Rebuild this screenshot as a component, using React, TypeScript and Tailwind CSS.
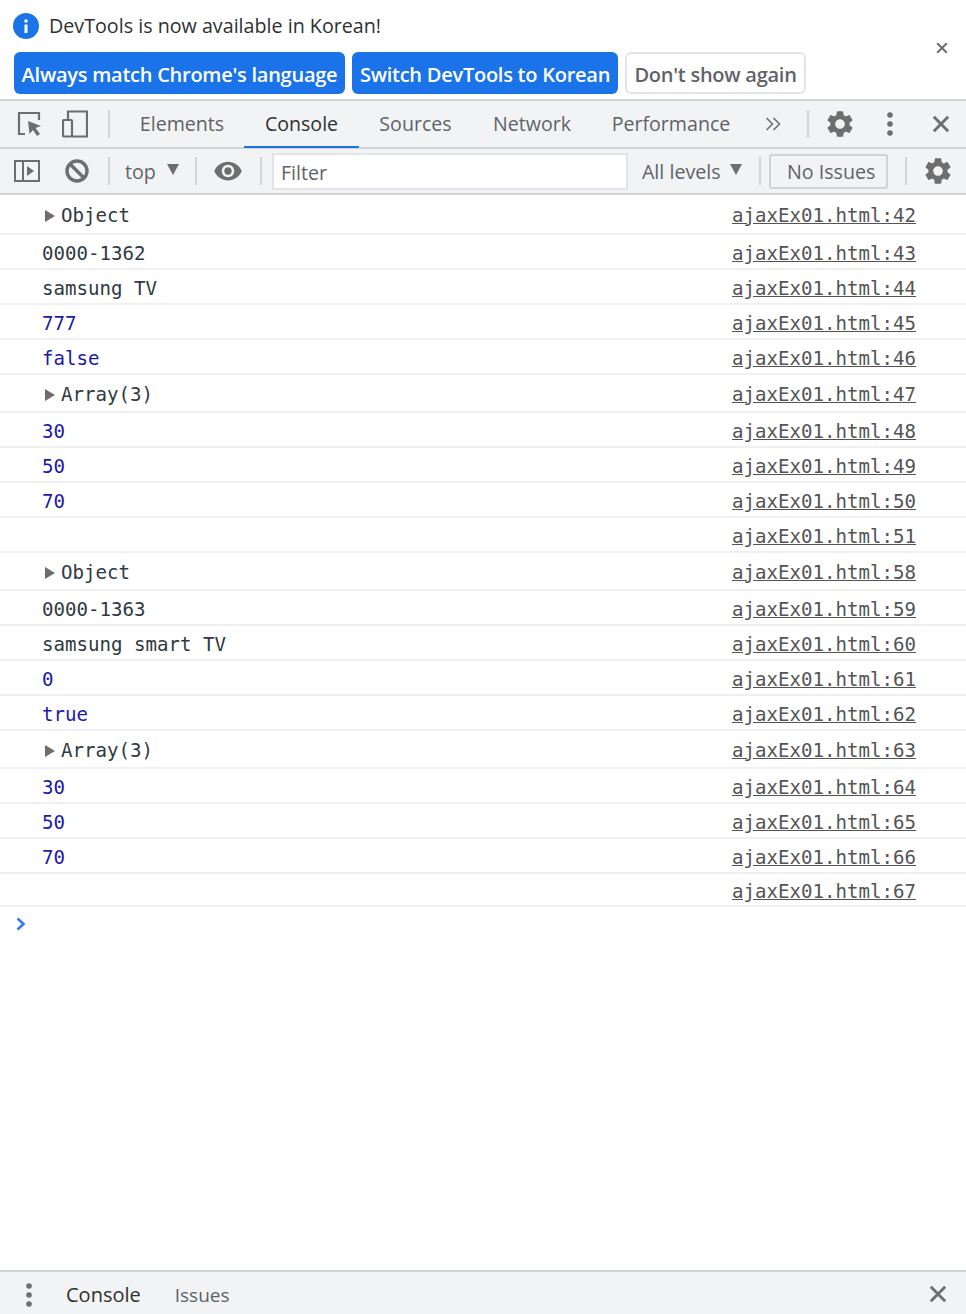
import clsx from 'clsx'

const uiFont = 'font-["Open_Sans",sans-serif]'

type Row = { text?: string; kind?: 'plain' | 'value' | 'group'; line: number; height: string }

const rows: Row[] = [
  { text: 'Object', kind: 'group', line: 42, height: 'h-[40px]' },
  { text: '0000-1362', line: 43, height: 'h-[35px]' },
  { text: 'samsung TV', line: 44, height: 'h-[35px]' },
  { text: '777', kind: 'value', line: 45, height: 'h-[35px]' },
  { text: 'false', kind: 'value', line: 46, height: 'h-[35px]' },
  { text: 'Array(3)', kind: 'group', line: 47, height: 'h-[38px]' },
  { text: '30', kind: 'value', line: 48, height: 'h-[35px]' },
  { text: '50', kind: 'value', line: 49, height: 'h-[35px]' },
  { text: '70', kind: 'value', line: 50, height: 'h-[35px]' },
  { line: 51, height: 'h-[35px]' },
  { text: 'Object', kind: 'group', line: 58, height: 'h-[38px]' },
  { text: '0000-1363', line: 59, height: 'h-[35px]' },
  { text: 'samsung smart TV', line: 60, height: 'h-[35px]' },
  { text: '0', kind: 'value', line: 61, height: 'h-[35px]' },
  { text: 'true', kind: 'value', line: 62, height: 'h-[35px]' },
  { text: 'Array(3)', kind: 'group', line: 63, height: 'h-[38px]' },
  { text: '30', kind: 'value', line: 64, height: 'h-[35px]' },
  { text: '50', kind: 'value', line: 65, height: 'h-[35px]' },
  { text: '70', kind: 'value', line: 66, height: 'h-[35px]' },
  { line: 67, height: 'h-[33px]' },
]

function GearIcon({ className }: { className?: string }) {
  return (
    <svg viewBox="0 0 24 24" className={className} fill="#6e6e6e">
      <path d="M19.14 12.94c.04-.3.06-.61.06-.94 0-.32-.02-.64-.07-.94l2.03-1.58c.18-.14.23-.41.12-.61l-1.92-3.32c-.12-.22-.37-.29-.59-.22l-2.39.96c-.5-.38-1.03-.7-1.62-.94l-.36-2.54c-.04-.24-.24-.41-.48-.41h-3.84c-.24 0-.43.17-.47.41l-.36 2.54c-.59.24-1.13.57-1.62.94l-2.39-.96c-.22-.08-.47 0-.59.22L2.74 8.87c-.12.21-.08.47.12.61l2.03 1.58c-.05.3-.09.63-.09.94s.02.64.07.94l-2.03 1.58c-.18.14-.23.41-.12.61l1.92 3.32c.12.22.37.29.59.22l2.39-.96c.5.38 1.03.7 1.62.94l.36 2.54c.05.24.24.41.48.41h3.84c.24 0 .44-.17.47-.41l.36-2.54c.59-.24 1.13-.56 1.62-.94l2.39.96c.22.08.47 0 .59-.22l1.92-3.32c.12-.22.07-.47-.12-.61l-2.01-1.58zM12 15.6c-1.98 0-3.6-1.62-3.6-3.6s1.62-3.6 3.6-3.6 3.6 1.62 3.6 3.6-1.62 3.6-3.6 3.6z" />
    </svg>
  )
}

function CloseIcon({ className, width = 3 }: { className?: string; width?: number }) {
  return (
    <svg viewBox="0 0 20 20" className={className} fill="none" stroke="#6e6e6e" strokeWidth={width}>
      <path d="M2 2 18 18M18 2 2 18" />
    </svg>
  )
}

function Dots({ className }: { className?: string }) {
  return (
    <svg viewBox="0 0 6 24" className={className} fill="#6e6e6e">
      <circle cx="3" cy="3" r="2.8" />
      <circle cx="3" cy="12" r="2.8" />
      <circle cx="3" cy="21" r="2.8" />
    </svg>
  )
}

function Divider({ className }: { className?: string }) {
  return <div className={clsx('h-[28px] w-[2px] shrink-0 bg-[#d2d4d8]', className)} />
}

function Caret({ className }: { className?: string }) {
  return (
    <svg viewBox="0 0 12 11" className={clsx('h-[11px] w-[12px] shrink-0', className)} fill="#6e6e6e">
      <path d="M0 0h12L6 11z" />
    </svg>
  )
}

function InfoBar() {
  const button = 'flex h-[42px] items-center justify-center whitespace-nowrap rounded-[6px] pt-[3px] text-[20px] font-semibold tracking-[-0.25px]'
  return (
    <div className="relative h-[99px] bg-white">
      <div className="flex items-center pl-[13px] pt-[12px]">
        <svg viewBox="0 0 26 26" className="h-[26px] w-[26px] shrink-0">
          <circle cx="13" cy="13" r="13" fill="#1a73e8" />
          <circle cx="13" cy="8" r="1.8" fill="#fff" />
          <rect x="11.5" y="11.5" width="3" height="8.5" fill="#fff" />
        </svg>
        <span className="ml-[10px] text-[19.7px] leading-[28px] text-[#303030]">DevTools is now available in Korean!</span>
      </div>
      <div className="mt-[12px] flex gap-[7px] pl-[14px]">
        <button className={clsx(button, 'w-[331px] bg-[#1a73e8] text-white')}>Always match Chrome's language</button>
        <button className={clsx(button, 'w-[266px] bg-[#1a73e8] text-white')}>Switch DevTools to Korean</button>
        <button className={clsx(button, 'w-[181px] border-2 border-[#e2e4e9] bg-white text-[#5f6368]')}>Don't show again</button>
      </div>
      <CloseIcon className="absolute right-[18px] top-[42px] h-[12px] w-[12px]" width={3.4} />
    </div>
  )
}

function MainTabs() {
  const tabs = [
    { label: 'Elements', className: 'w-[134px] pl-[10px] text-[#5f6368]' },
    { label: 'Console', className: 'w-[115px] text-[#303030]', active: true },
    { label: 'Sources', className: 'w-[113px] text-[#5f6368]' },
    { label: 'Network', className: 'w-[120px] text-[#5f6368]' },
    { label: 'Performance', className: 'w-[158px] text-[#5f6368]' },
  ]
  return (
    <div className="flex h-[50px] items-center border-y-2 border-[#d0d2d6] bg-[#f1f3f4]">
      <svg viewBox="0 0 26 26" className="ml-[17px] h-[26px] w-[26px] shrink-0" fill="none" stroke="#6e6e6e" strokeWidth="2.2">
        <path d="M8 23H2V2h20v7" />
        <path d="M11 10l13 5-5.5 2 4.5 6-3 2-4-6-3.5 4z" fill="#6e6e6e" stroke="none" />
      </svg>
      <svg viewBox="0 0 26 28" className="ml-[19px] h-[28px] w-[26px] shrink-0" fill="none" stroke="#6e6e6e" strokeWidth="2.2">
        <path d="M6 9V1.5h19v25H10" />
        <rect x="1" y="10" width="9" height="16.5" rx="1" />
      </svg>
      <Divider className="ml-[20px]" />
      <div className="flex h-full">
        {tabs.map((tab) => (
          <div key={tab.label} className={clsx('relative flex items-center justify-center text-[19.6px]', tab.className)}>
            {tab.label}
            {tab.active ? <div className="absolute inset-x-0 -bottom-[1px] h-[2px] bg-[#1a73e8]" /> : null}
          </div>
        ))}
      </div>
      <svg viewBox="0 0 16 14" className="ml-[15px] h-[14px] w-[16px] shrink-0" fill="none" stroke="#6e6e6e" strokeWidth="1.6">
        <path d="M1.5 1 7.5 7 1.5 13M8.5 1 14.5 7 8.5 13" />
      </svg>
      <Divider className="ml-[26px]" />
      <GearIcon className="ml-[15px] h-[32px] w-[32px] shrink-0" />
      <Dots className="ml-[31px] h-[24px] w-[6px] shrink-0" />
      <CloseIcon className="ml-[39px] h-[18px] w-[18px] shrink-0" width={3.2} />
    </div>
  )
}

function ConsoleToolbar() {
  return (
    <div className="flex h-[46px] items-center border-b-2 border-[#d0d2d6] bg-[#f1f3f4] text-[19.7px] text-[#5f6368]">
      <svg viewBox="0 0 26 22" className="ml-[14px] h-[22px] w-[26px] shrink-0" fill="none" stroke="#6e6e6e" strokeWidth="2">
        <rect x="1" y="1" width="24" height="20" />
        <path d="M9 1v20" />
        <path d="M13 6l7 5-7 5z" fill="#6e6e6e" stroke="none" />
      </svg>
      <svg viewBox="0 0 24 24" className="ml-[25px] h-[24px] w-[24px] shrink-0" fill="none" stroke="#6e6e6e" strokeWidth="3.4">
        <circle cx="12" cy="12" r="10" />
        <path d="M5 5l14 14" />
      </svg>
      <Divider className="ml-[19px]" />
      <span className="ml-[15px] pt-[2px]">top</span>
      <Caret className="ml-[11px] mb-[4px]" />
      <Divider className="ml-[16px]" />
      <svg viewBox="0 0 24 24" className="ml-[16px] h-[30px] w-[30px] shrink-0" fill="#6e6e6e">
        <path d="M12 4.5C7 4.5 2.73 7.61 1 12c1.73 4.39 6 7.5 11 7.5s9.27-3.11 11-7.5c-1.73-4.39-6-7.5-11-7.5zM12 17c-2.76 0-5-2.24-5-5s2.24-5 5-5 5 2.24 5 5-2.24 5-5 5zm0-8c-1.66 0-3 1.34-3 3s1.34 3 3 3 3-1.34 3-3-1.34-3-3-3z" />
      </svg>
      <Divider className="ml-[17px]" />
      <div className="ml-[10px] flex h-[37px] w-[356px] shrink-0 items-center border-2 border-[#e2e4e9] bg-white pl-[7px] pt-[3px]">Filter</div>
      <span className="ml-[14px] pt-[1px]">All levels</span>
      <Caret className="ml-[9px] mb-[4px]" />
      <Divider className="ml-[17px]" />
      <div className="ml-[8px] flex h-[35px] w-[119px] shrink-0 items-center justify-center rounded-[3px] border-2 border-[#d0d2d6] pl-[6px] pt-[1px]">No Issues</div>
      <Divider className="ml-[17px]" />
      <GearIcon className="ml-[15px] h-[32px] w-[32px] shrink-0" />
    </div>
  )
}

function LogRow({ row }: { row: Row }) {
  return (
    <div className={clsx('flex items-center justify-between border-b-2 border-[#f0f0f0] pr-[50px] font-["DejaVu_Sans_Mono",monospace] text-[19.1px]', row.height, row.kind === 'group' ? 'pt-[4px]' : 'pt-[6px]')}>
      <div className={clsx('flex items-center pl-[42px] whitespace-pre', row.kind === 'value' ? 'text-[#1a1aa6]' : 'text-[#303942]')}>
        {row.kind === 'group' ? (
          <>
            <svg viewBox="0 0 10 12" className="ml-[3px] mr-[6px] h-[12px] w-[10px] shrink-0" fill="#6e6e6e">
              <path d="M0 0l10 6-10 6z" />
            </svg>
            {row.text}
          </>
        ) : row.text}
      </div>
      <a className="text-[#545454] underline">ajaxEx01.html:{row.line}</a>
    </div>
  )
}

export default function App() {
  return (
    <div className={clsx('flex h-[1314px] w-[966px] flex-col overflow-hidden bg-white', uiFont)}>
      <InfoBar />
      <MainTabs />
      <ConsoleToolbar />
      <div>
        {rows.map((row, index) => <LogRow key={index} row={row} />)}
      </div>
      <div className="pl-[16px] pt-[10px]">
        <svg viewBox="0 0 10 14" className="h-[14px] w-[10px]" fill="none" stroke="#367cf1" strokeWidth="2.6">
          <path d="M1.5 1.5 7.5 7l-6 5.5" />
        </svg>
      </div>
      <div className="mt-auto flex h-[44px] items-center border-t-2 border-[#d0d2d6] bg-[#f1f3f4]">
        <Dots className="ml-[26px] mt-[3px] h-[24px] w-[6px] shrink-0" />
        <span className="ml-[34px] pt-[4px] text-[20px] text-[#303030]">Console</span>
        <span className="ml-[34px] pt-[4px] text-[19px] text-[#5f6368]">Issues</span>
        <CloseIcon className="ml-auto mr-[19px] mt-[2px] h-[18px] w-[18px]" width={3.2} />
      </div>
    </div>
  )
}
